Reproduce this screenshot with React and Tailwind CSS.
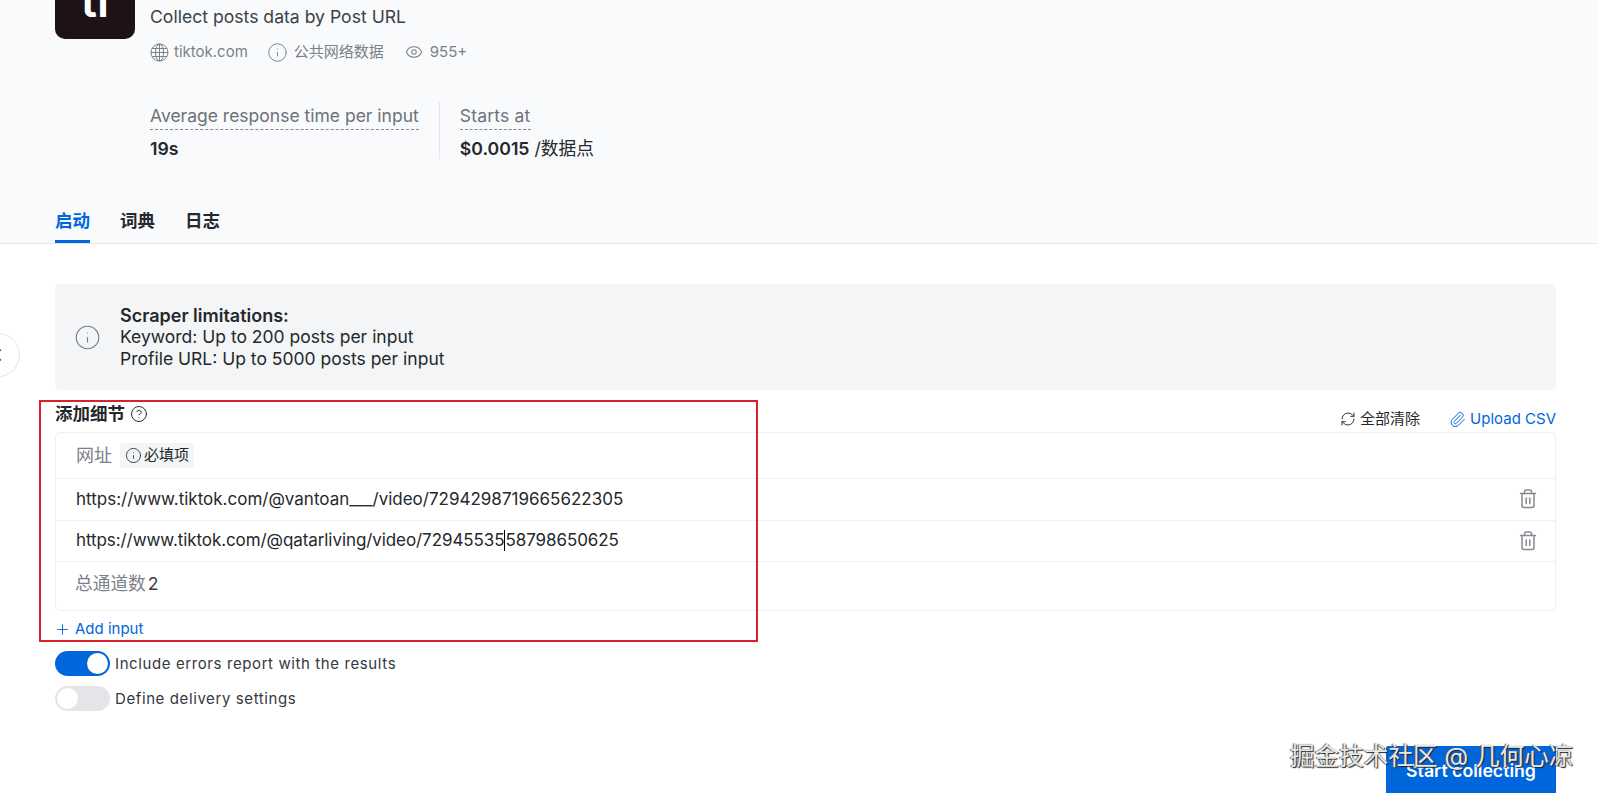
import { Info, Eye, CircleHelp, RefreshCw, Paperclip, Plus, ChevronLeft } from "lucide-react";

const FONT = "font-['Inter','Noto_Sans_CJK_SC',sans-serif]";

const URLS = [
  { before: "https://www.tiktok.com/@vantoan___/video/7294298719665622305", after: null, spacing: "" },
  { before: "https://www.tiktok.com/@qatarliving/video/72945535", after: "58798650625", spacing: "tracking-[-0.08px]" },
];

function GlobeIcon() {
  return (
    <svg width="19" height="19" viewBox="0 0 19 19" fill="none" stroke="currentColor" strokeWidth="1">
      <circle cx="9.5" cy="9.5" r="8.5" />
      <ellipse cx="9.5" cy="9.5" rx="4" ry="8.5" />
      <path d="M9.5 1v17M2.2 5.5h14.6M1 9.5h17M2.2 13.5h14.6" />
    </svg>
  );
}

function TrashIcon() {
  return (
    <svg width="18" height="20" viewBox="0 0 18 20" fill="none" stroke="#85898e" strokeWidth="1.5" strokeLinecap="round" strokeLinejoin="round">
      <path d="M1.5 4.5h15" />
      <path d="M5.5 4.5V3a2 2 0 0 1 2-2h3a2 2 0 0 1 2 2v1.5" />
      <path d="M3 4.5v12a2 2 0 0 0 2 2h8a2 2 0 0 0 2-2v-12" />
      <path d="M7.2 9v5.5M10.8 9v5.5" />
    </svg>
  );
}

function Toggle({ on, label }) {
  return (
    <div className="flex h-[25px] items-center gap-[5px]">
      <div className={`flex h-[25px] w-[55px] items-center rounded-full px-[2px] ${on ? "justify-end bg-[#0066dc]" : "justify-start bg-[#e3e5e8]"}`}>
        <div className="h-[21px] w-[21px] rounded-full bg-white" />
      </div>
      <span className="mt-[2px] text-[15px] tracking-[0.6px] text-[#35393f]">{label}</span>
    </div>
  );
}

function UrlRow({ before, after, spacing }) {
  return (
    <div className="flex h-[41.5px] items-center justify-between border-b border-[#eef0f2] pl-[20px] pr-[18px]">
      <span className={`flex items-center text-[17px] text-[#24272b] ${spacing}`}>
        {before}
        {after && <span className="h-[21px] w-px bg-black" />}
        {after}
      </span>
      <TrashIcon />
    </div>
  );
}

export default function App() {
  return (
    <div className={`${FONT} relative h-[793px] overflow-hidden bg-white`}>
      <header className="h-[244px] border-b border-[#e3e5e8] bg-[#f8fafc] pl-[55px]">
        <div className="flex gap-[15px]">
          <div className="-mt-[41px] flex h-[80px] w-[80px] shrink-0 items-end justify-center overflow-hidden rounded-[10px] bg-[#1f1216] pb-[16px]">
            <span className="text-[46px] font-semibold leading-none text-white">ti</span>
          </div>
          <div>
            <p className="mt-[5px] text-[17.6px] leading-[24px] text-[#3c4046]">Collect posts data by Post URL</p>
            <div className="mt-[12px] flex h-[22px] items-center text-[15px] text-[#7c8187]">
              <GlobeIcon />
              <span className="ml-[5px]">tiktok.com</span>
              <Info size={21} strokeWidth={1.1} className="ml-[19px]" />
              <span className="ml-[6px]">公共网络数据</span>
              <Eye size={18} strokeWidth={1.4} className="ml-[21px]" />
              <span className="ml-[7px]">955+</span>
            </div>
            <div className="mt-[39px] flex">
              <div className="pr-[20px]">
                <div className="h-[26px] leading-[28px]">
                  <span className="border-b border-dashed border-[#85898e] pb-[3px] text-[17.5px] text-[#6d7278]">Average response time per input</span>
                </div>
                <p className="mt-[11px] text-[17.7px] font-semibold leading-[20px] text-[#25282c]">19s</p>
              </div>
              <div className="border-l border-[#e3e5e8] pl-[20px]">
                <div className="h-[26px] leading-[28px]">
                  <span className="border-b border-dashed border-[#85898e] pb-[3px] text-[17.5px] tracking-[0.2px] text-[#6d7278]">Starts at</span>
                </div>
                <p className="mt-[11px] text-[17.7px] leading-[20px] text-[#25282c]"><b className="font-semibold">$0.0015</b> /数据点</p>
              </div>
            </div>
          </div>
        </div>
        <nav className="mt-[49px] flex gap-[30px] text-[17.5px] font-bold leading-[26px] text-[#25282c]">
          <span className="h-[35px] border-b-[3px] border-[#0066dc] text-[#0066dc]">启动</span>
          <span>词典</span>
          <span>日志</span>
        </nav>
      </header>

      <main className="pl-[55px] pr-[42px] pt-[40px]">
        <div className="flex h-[106px] items-center rounded-[5px] bg-[#f3f5f6] pl-[19px]">
          <Info size={27} strokeWidth={1} className="text-[#787c82]" />
          <div className="ml-[19px] text-[17.5px] leading-[22px] text-[#25282c]">
            <p className="pt-[1px] text-[18px] font-semibold leading-[21px]">Scraper limitations:</p>
            <p>Keyword: Up to 200 posts per input</p>
            <p>Profile URL: Up to 5000 posts per input</p>
          </div>
        </div>

        <div className="mt-[12px] flex h-[30px] items-start justify-between">
          <div className="flex items-center gap-[5px] text-[17.5px] font-semibold leading-[24px] text-[#25282c]">
            添加细节 <CircleHelp size={18} strokeWidth={1.3} />
          </div>
          <div className="mt-[5px] flex items-center text-[15px] leading-[24px]">
            <RefreshCw size={16} strokeWidth={1.4} className="text-[#25282c]" />
            <span className="ml-[4px] text-[#25282c]">全部清除</span>
            <Paperclip size={17} strokeWidth={1.4} className="ml-[29px] text-[#0066dc]" />
            <span className="ml-[4px] text-[#0066dc]">Upload CSV</span>
          </div>
        </div>

        <div className="rounded-[5px] border border-[#eef0f2]">
          <div className="flex h-[46px] items-center border-b border-[#eef0f2] pl-[20px]">
            <span className="text-[18px] text-[#7c8187]">网址</span>
            <span className="ml-[8px] flex h-[25px] items-center gap-[2px] rounded-[4px] bg-[#f3f5f6] px-[5px] text-[15px] text-[#25282c]">
              <Info size={17} strokeWidth={1.2} />必填项
            </span>
          </div>
          {URLS.map((url) => <UrlRow key={url.before} {...url} />)}
          <div className="flex h-[48px] items-center pb-[3px] pl-[19px] text-[17.7px] text-[#7c8187]">
            总通道数<span className="ml-[2px] text-[#3c4046]">2</span>
          </div>
        </div>

        <div className="mt-[8px] flex items-center gap-[4px] text-[15px] leading-[20px] text-[#0066dc]">
          <Plus size={17} strokeWidth={1.3} className="-ml-px" /> Add input
        </div>

        <div className="mt-[12px] flex flex-col gap-[10px]">
          <Toggle on label="Include errors report with the results" />
          <Toggle label="Define delivery settings" />
        </div>
      </main>

      <div className="absolute left-[-24px] top-[333px] flex h-[44px] w-[44px] items-center justify-center rounded-full border border-[#e3e5e8] bg-white">
        <ChevronLeft size={20} strokeWidth={1.5} className="text-[#444]" />
      </div>

      <div className="absolute left-[39px] top-[400px] h-[242px] w-[719px] border-2 border-[#d9202f]" />

      <button className="absolute bottom-0 right-[42px] h-[47px] w-[170px] rounded-t-[2px] bg-[#0066dc] pt-[3px] text-[17.7px] font-semibold text-white">
        Start collecting
      </button>

      <div className="absolute left-[1290px] top-[741px] text-[24.6px] leading-[30px] text-[#e8e8e8] [text-shadow:1px_1px_1px_#222,-1px_0_1px_#555]">
        掘金技术社区 @ 几何心凉
      </div>
    </div>
  );
}
